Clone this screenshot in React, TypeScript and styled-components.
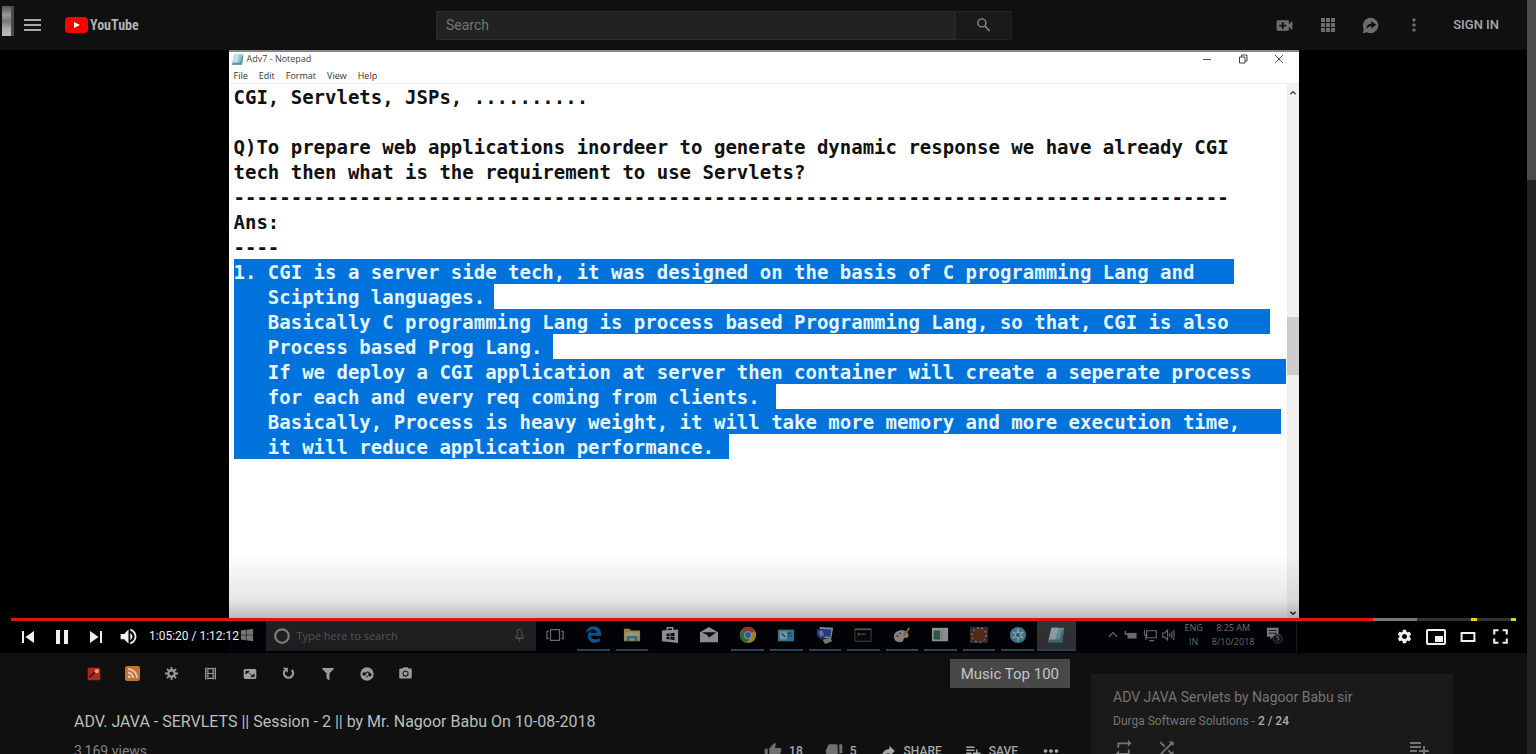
import React from "react";
import styled, { createGlobalStyle } from "styled-components";
import {
  MdVideoCall, MdMoreVert, MdSkipPrevious, MdSkipNext, MdPause, MdVolumeUp, MdSettings,
  MdThumbUp, MdThumbDown, MdReply, MdPlaylistAdd, MdRepeat, MdShuffle, MdMoreHoriz, MdFullscreen,
  MdPhotoCamera,
} from "react-icons/md";
import { FaWindows, FaFilter } from "react-icons/fa";
import { FaEdgeLegacy } from "react-icons/fa6";

const Global = createGlobalStyle`
  *, *::before, *::after { box-sizing: border-box; }
  body { margin: 0; background: #101010; font-family: Roboto, "Liberation Sans", sans-serif; }
  button { border: 0; padding: 0; margin: 0; background: none; color: inherit; font: inherit; cursor: pointer; }
  h1, h2, p { margin: 0; font-weight: 400; }
  svg { display: block; flex: none; }
`;

const Window = styled.div`
  display: flex;
  height: 100vh;
  overflow: hidden;
`;
const Page = styled.div`
  flex: 1;
  min-width: 0;
`;
const PageScroll = styled.div`
  width: 9px;
  background: #232323;
`;
const PageThumb = styled.div`
  height: 180px;
  background: #4b4b4b;
`;

/* Header */
const Header = styled.header`
  display: grid;
  grid-template-columns: 436px minmax(0, 576px) 1fr;
  align-items: center;
  height: 50px;
  background: #101010;
`;
const Brand = styled.div`
  display: flex;
  align-items: center;
  height: 50px;
  padding-left: 2px;
`;
const Handle = styled.span`
  width: 12px;
  height: 30px;
  margin: 0 10px 8px 0;
  border-right: 3px solid #4a4a4a;
  background: linear-gradient(#555, #999 30%, #777 50%, #aaa 75%, #bbb);
`;
const MenuButton = styled.button`
  display: flex;
  flex-direction: column;
  gap: 3px;
  width: 17px;
  margin-right: 24px;
`;
const MenuBar = styled.span`
  height: 2px;
  background: #a8a8a8;
`;
const Logo = styled.a`
  display: flex;
  align-items: center;
  gap: 2px;
  color: #b0b0b0;
  text-decoration: none;
  font: 700 14px/20px "Liberation Sans Narrow", "Roboto Condensed", Roboto, sans-serif;
`;
const SearchForm = styled.form`
  display: flex;
  height: 29px;
`;
const SearchInput = styled.input`
  flex: 1;
  min-width: 0;
  padding: 0 9px;
  border: 1px solid #2b2b2b;
  background: #222;
  color: #ccc;
  font: 400 14px/20px Roboto, sans-serif;
  outline: 0;
  &::placeholder { color: #757575; opacity: 1; }
`;
const SearchButton = styled.button`
  display: grid;
  place-items: center;
  width: 57px;
  border: 1px solid #232323;
  background: #1a1a1a;
  color: #8a8a8a;
`;
const HeaderActions = styled.div`
  display: flex;
  justify-content: flex-end;
  align-items: center;
  padding-right: 28px;
  color: #6d6d6d;
`;
const HeaderIcon = styled.button`
  display: grid;
  place-items: center;
  width: 43px;
  height: 40px;
`;
const SignIn = styled.a`
  margin-left: 18px;
  color: #a8a8a8;
  text-decoration: none;
  font-size: 13px;
  font-weight: 500;
  line-height: 20px;
`;

/* Player */
const Player = styled.section`
  position: relative;
  height: 603px;
  overflow: hidden;
  background: #000;
`;
const Frame = styled.div`
  display: flex;
  flex-direction: column;
  height: 100%;
  aspect-ratio: 1070 / 603;
  margin: 0 auto;
  background: #fff;
  font-family: "Open Sans", "Noto Sans", sans-serif;
`;
const TitleBar = styled.div`
  display: flex;
  align-items: center;
  gap: 3px;
  height: 18px;
  padding: 0 15px 2px 2px;
  border-top: 2px solid #888;
  color: #444;
  font-size: 9px;
  line-height: 12px;
`;
const WindowButtons = styled.div`
  display: flex;
  gap: 26px;
  margin-left: auto;
`;
const MenuRow = styled.div`
  display: flex;
  gap: 11px;
  height: 16px;
  padding-left: 5px;
  border-bottom: 1px solid #eee;
  color: #333;
  font-size: 9px;
  line-height: 16px;
`;
const Editor = styled.div`
  display: flex;
  flex: 1;
  min-height: 0;
`;
const Document = styled.div`
  flex: 1;
  min-width: 0;
  padding-left: 5px;
  color: #111;
  font: 700 19px/27px "DejaVu Sans Mono", "Liberation Mono", monospace;
  white-space: pre;
`;
const Line = styled.div`
  height: 25px;
`;
const Selected = styled.div<{ $width: number }>`
  width: ${(p) => p.$width}px;
  max-width: 100%;
  height: 25px;
  background: #0072dc;
  color: #e4f6ff;
`;
const EditorScroll = styled.div`
  display: flex;
  flex-direction: column;
  align-items: center;
  width: 12px;
  padding: 5px 0 3px;
  background: #f0f0f0;
`;
const EditorThumb = styled.div`
  width: 12px;
  height: 58px;
  margin: 220px 0 auto;
  background: #cdcdcd;
`;
const Taskbar = styled.div`
  display: flex;
  height: 33px;
  background: #02040a;
  color: #aaa;
`;
const StartCell = styled.div`
  display: grid;
  place-items: center;
  width: 37px;
  padding-bottom: 3px;
`;
const TaskSearch = styled.div`
  display: flex;
  align-items: center;
  gap: 6px;
  width: 270px;
  height: 31px;
  padding: 0 9px 0 7px;
  background: #2c2d30;
  color: #777;
  font-size: 11px;
  line-height: 16px;
  svg:last-child { margin-left: auto; }
`;
const TaskIcons = styled.div`
  display: grid;
  grid-template-columns: repeat(14, 1fr);
  width: 540px;
`;
const TaskCell = styled.div<{ $open?: boolean; $active?: boolean }>`
  display: grid;
  place-items: center;
  height: 31px;
  margin: 0 ${(p) => (p.$active ? 0 : 3)}px;
  border-bottom: 2px solid ${(p) => (p.$open ? "#47647e" : "transparent")};
  background: ${(p) => (p.$active ? "#43464a" : "none")};
`;
const Tray = styled.div`
  display: flex;
  flex: 1;
  align-items: center;
  gap: 5px;
  padding: 0 2px 3px 31px;
  border-right: 1px solid #222;
  margin-right: 2px;
  color: #999;
  font-size: 9px;
  line-height: 14px;
  text-align: center;
`;
const TrayText = styled.span`
  margin-left: 4px;
  white-space: nowrap;
`;
const Notice = styled.span`
  margin-left: auto;
  padding-right: 10px;
`;

/* Player controls over the video */
const Shade = styled.div`
  position: absolute;
  inset: auto 0 0;
  height: 100px;
  background: linear-gradient(transparent, rgba(0, 0, 0, 0.1) 47%, rgba(0, 0, 0, 0.27) 65%, rgba(0, 0, 0, 0.35));
`;
const Controls = styled.div`
  position: absolute;
  inset: auto 11px 0;
  color: #f0f0f0;
`;
const Progress = styled.div`
  display: flex;
  height: 3px;
  background: #333;
`;
const Span = styled.span<{ $grow: number; $color: string }>`
  flex: ${(p) => p.$grow} 1 0;
  background: ${(p) => p.$color};
`;
const ControlRow = styled.div`
  display: flex;
  align-items: center;
  height: 32px;
  padding-bottom: 1px;
`;
const ControlButton = styled.button<{ $width?: number }>`
  display: grid;
  place-items: center;
  width: ${(p) => p.$width ?? 34}px;
  height: 31px;
`;
const Time = styled.span`
  margin: 0 auto 1px 6px;
  font-size: 12px;
  line-height: 16px;
`;

/* Below the player */
const Below = styled.main`
  display: flex;
  gap: 21px;
  padding: 0 74px;
`;
const Primary = styled.div`
  flex: 1;
  min-width: 0;
`;
const Tools = styled.div`
  display: flex;
  align-items: center;
  height: 41px;
  color: #9a9a9a;
`;
const ToolButton = styled.button`
  display: grid;
  place-items: center;
  width: 39px;
  height: 30px;
`;
const MusicButton = styled.button`
  height: 29px;
  margin-left: auto;
  padding: 0 11px;
  background: #484848;
  color: #c4c4c4;
  font: 400 15px/20px Roboto, "Liberation Sans", sans-serif;
`;
const VideoTitle = styled.h1`
  margin-top: 16px;
  color: #bdbdbd;
  font-size: 16px;
  line-height: 24px;
`;
const Meta = styled.div`
  display: flex;
  align-items: center;
  justify-content: space-between;
  height: 34px;
  color: #858585;
  font-size: 14px;
  line-height: 20px;
`;
const Actions = styled.div`
  display: flex;
  gap: 22px;
  padding-right: 8px;
  color: #a8a8a8;
  font-size: 12px;
  font-weight: 500;
`;
const Action = styled.button`
  display: flex;
  align-items: center;
  gap: 7px;
`;
const Flip = styled.span`
  transform: scaleX(-1);
`;
const Muted = styled.span`
  color: #717171;
`;
const Playlist = styled.aside`
  width: 362px;
  height: 120px;
  margin-top: 21px;
  padding: 13px 22px;
  background: #1a1a1a;
  color: #757575;
`;
const PlaylistTitle = styled.h2`
  font-size: 14px;
  line-height: 20px;
`;
const PlaylistBy = styled.p`
  margin-top: 6px;
  font-size: 12px;
  line-height: 16px;
`;
const Count = styled.span`
  color: #aaa;
  font-weight: 500;
`;
const PlaylistTools = styled.div`
  display: flex;
  gap: 22px;
  margin-top: 7px;
  button:last-child { margin-left: auto; }
`;

const heading = [
  "CGI, Servlets, JSPs, ..........",
  "",
  "Q)To prepare web applications inordeer to generate dynamic response we have already CGI",
  "tech then what is the requirement to use Servlets?",
  "-".repeat(87),
  "Ans:",
  "----",
];
const answer: [string, number][] = [
  ["1. CGI is a server side tech, it was designed on the basis of C programming Lang and ", 1000],
  ["   Scipting languages.", 260],
  ["   Basically C programming Lang is process based Programming Lang, so that, CGI is also ", 1036],
  ["   Process based Prog Lang.", 319],
  ["   If we deploy a CGI application at server then container will create a seperate process ", 1052],
  ["   for each and every req coming from clients.", 542],
  ["   Basically, Process is heavy weight, it will take more memory and more execution time, ", 1047],
  ["   it will reduce application performance.", 495],
];

const Draw = ({ size = 18, box = 20, children }: { size?: number; box?: number; children: React.ReactNode }) => (
  <svg width={size} height={size} viewBox={`0 0 ${box} ${box}`} fill="none" aria-hidden="true">{children}</svg>
);

const NotePage = ({ size }: { size: number }) => (
  <Draw size={size}>
    <path d="M5 2h14l-2 16H1z" fill="#8fc3d2" />
    <path d="M5 2h8L9 16H2z" fill="#c2e2e9" />
    <path d="M1 18l2-3h11l3-10 2-1-2 14z" fill="#5b93a2" />
  </Draw>
);
const TaskView = () => (
  <Draw><path d="M5 4h10v12H5zM3 6H1v8h2M17 6h2v8h-2" stroke="#999" strokeWidth="1.4" /></Draw>
);
const Folder = () => (
  <Draw><path d="M1 3h6l2 2h10v12H1z" fill="#d9b565" /><path d="M2 7h16v8H2z" fill="#efd695" /><path d="M4 17v-6h12v6h-3v-3H7v3z" fill="#4c9ac0" /></Draw>
);
const Store = () => (
  <Draw>
    <path d="M7 6V2h6v4" stroke="#ccc" strokeWidth="1.6" /><path d="M1 5l18-1v15L1 17z" fill="#ccc" />
    <path d="M6 8.500l3.500-.5v3H6zM10.500 8L15 7.500V11h-4.500zM6 12h3.500v3L6 14.500zM10.500 12H15v3.500l-4.500-.5z" fill="#111" />
  </Draw>
);
const Mail = () => (
  <Draw><path d="M0 7l10-6 10 6v11H0z" fill="#ccc" /><path d="M2 7h16l-8 6-2-3z" fill="#111" /></Draw>
);
const Chrome = () => (
  <Draw>
    <circle cx="10" cy="10" r="9" fill="#e4bd3a" />
    <path d="M10 10L2.200 5.500A9 9 0 0 1 17.800 5.500z" fill="#d24b3e" />
    <path d="M2.200 5.500A9 9 0 0 0 9 19l3.500-7L10 10z" fill="#3b9a55" />
    <circle cx="10" cy="10" r="4.300" fill="#ddd" /><circle cx="10" cy="10" r="3.300" fill="#4180d8" />
  </Draw>
);
const Panel = () => (
  <Draw><path d="M1 4h18v13H1z" fill="#4ba3cc" /><path d="M3 6h8v9H3z" fill="#9cdcec" /><path d="M5 8l4 4M12 8h5M12 11h5" stroke="#1f668e" strokeWidth="1.500" /></Draw>
);
const Remote = () => (
  <Draw><path d="M4 1l15 1-2 12-12-1z" fill="#b5c0d4" /><path d="M6 3l11 1-1 8-9-1z" fill="#3158b8" /><path d="M1 4l6-1 4 8-6 4-4-5z" fill="#3c50c0" /><path d="M3 6l4-1 2 5-4 2z" fill="#96a4e0" /><path d="M7 15l9-2 2 4-8 3z" fill="#b0b0a4" /></Draw>
);
const Terminal = () => (
  <Draw><path d="M1 3h18v14H1z" fill="#0a0a0a" stroke="#666" /><path d="M1 4h18" stroke="#999" /><path d="M4 8l3 1-3 2M8 9h5" stroke="#999" /></Draw>
);
const Palette = () => (
  <Draw>
    <path d="M1 12c0-5 5-8 11-7 4 1 6 4 5 7-1 2-4 0-5 2s0 4-4 4c-4 0-7-2-7-6z" fill="#c0c0b8" />
    <circle cx="5" cy="11" r="1.300" fill="#b44" /><circle cx="8" cy="8" r="1.300" fill="#57a" /><circle cx="13" cy="8" r="1.300" fill="#695" />
    <path d="M12 12l6-10" stroke="#c89050" strokeWidth="2" />
  </Draw>
);
const Editplus = () => (
  <Draw><path d="M1 2h18v15H1z" fill="#c8d0ca" /><path d="M3 5h7v10H3z" fill="#3f7967" /><path d="M12 5v10" stroke="#999" /></Draw>
);
const Badger = () => (
  <Draw>
    <path d="M0 1h20v18H0z" fill="#493b54" /><circle cx="10" cy="10" r="7.500" fill="#7a3d20" />
    <circle cx="10" cy="10" r="8" stroke="#c8b49a" strokeWidth="1.500" strokeDasharray="2 3" />
  </Draw>
);
const Flower = () => (
  <Draw>
    <circle cx="10" cy="10" r="9" fill="#5aa5c8" />
    <path d="M10 3v14M4 6.500l12 7M16 6.500l-12 7" stroke="#d5edf4" strokeWidth="1.600" />
    <circle cx="10" cy="10" r="3" stroke="#d5edf4" fill="#3f8bb4" />
  </Draw>
);

const tasks: { icon: React.ReactNode; open?: boolean; active?: boolean }[] = [
  { icon: <TaskView /> },
  { icon: <FaEdgeLegacy size={17} color="#0b78d0" />, open: true },
  { icon: <Folder />, open: true },
  { icon: <Store /> },
  { icon: <Mail /> },
  { icon: <Chrome />, open: true },
  { icon: <Panel />, open: true },
  { icon: <Remote />, open: true },
  { icon: <Terminal />, open: true },
  { icon: <Palette />, open: true },
  { icon: <Editplus />, open: true },
  { icon: <Badger />, open: true },
  { icon: <Flower />, open: true },
  { icon: <NotePage size={18} />, open: true, active: true },
];

const tools: { label: string; icon: React.ReactNode }[] = [
  { label: "Magic actions", icon: <Draw size={14}><rect x="1" y="1" width="18" height="18" rx="2" fill="#a92a1e" /><path d="M3 15L13 6" stroke="#5d1410" strokeWidth="3" /><circle cx="14" cy="6" r="3" fill="#f0a070" /></Draw> },
  { label: "Feed", icon: <Draw size={15}><rect width="20" height="20" rx="3" fill="#bd7436" /><path d="M4 4a12 12 0 0 1 12 12M4 9a7 7 0 0 1 7 7" stroke="#e0cbb8" strokeWidth="2.400" /><circle cx="5.500" cy="14.500" r="1.800" fill="#e0cbb8" /></Draw> },
  { label: "Options", icon: <Draw size={13}><circle cx="10" cy="10" r="5" stroke="#9a9a9a" strokeWidth="3.500" /><path d="M10 0v4M10 16v4M0 10h4M16 10h4M3 3l3 3M14 14l3 3M17 3l-3 3M6 14l-3 3" stroke="#9a9a9a" strokeWidth="2.800" /></Draw> },
  { label: "Cinema mode", icon: <Draw size={13}><path d="M2.500 1v18M17.500 1v18M6 2.500h8M6 10h8M6 17.500h8M6 1v18M14 1v18" stroke="#9a9a9a" strokeWidth="1.800" /><path d="M2 2h4M2 6h4M2 10h4M2 14h4M2 18h4M14 2h4M14 6h4M14 10h4M14 14h4M14 18h4" stroke="#9a9a9a" /></Draw> },
  { label: "Wide mode", icon: <Draw size={14}><rect x="1" y="3" width="18" height="14" rx="2" fill="#a0a0a0" /><path d="M4 10V6h5zM16 10v4h-5zM8 8l5 4" fill="#101010" stroke="#101010" /></Draw> },
  { label: "Loop", icon: <Draw size={13}><path d="M5 4.500a7 7 0 1 0 10 0" stroke="#9a9a9a" strokeWidth="3.500" /><path d="M1 1h8v8z" fill="#9a9a9a" /></Draw> },
  { label: "Filters", icon: <FaFilter size={12} /> },
  { label: "Speed", icon: <Draw size={14}><circle cx="10" cy="10" r="9.500" fill="#9a9a9a" /><circle cx="6" cy="10" r="2.500" fill="#101010" /><circle cx="14" cy="11" r="2.500" fill="#101010" /><path d="M8 9l3-2 4 3M10 12v3" stroke="#101010" strokeWidth="1.500" /></Draw> },
  { label: "Snapshot", icon: <MdPhotoCamera size={15} /> },
];

export default function App() {
  return (
    <Window>
      <Global />
      <Page>
        <Header>
          <Brand>
            <Handle />
            <MenuButton aria-label="Menu"><MenuBar /><MenuBar /><MenuBar /></MenuButton>
            <Logo href="#">
              <svg width="23" height="16" viewBox="0 0 23 16"><rect width="23" height="16" rx="4" fill="#f00" /><path d="M9 5v6l6-3z" fill="#fff" /></svg>
              YouTube
            </Logo>
          </Brand>
          <SearchForm>
            <SearchInput aria-label="Search" placeholder="Search" />
            <SearchButton type="button" aria-label="Submit search">
              <Draw size={14}><circle cx="7" cy="7" r="5.700" stroke="#8a8a8a" strokeWidth="2" /><path d="M11 11l7 7.500" stroke="#8a8a8a" strokeWidth="2.300" /></Draw>
            </SearchButton>
          </SearchForm>
          <HeaderActions>
            <HeaderIcon aria-label="Create"><MdVideoCall size={21} /></HeaderIcon>
            <HeaderIcon aria-label="Apps">
              <svg width="16" height="16" viewBox="0 0 16 16" fill="currentColor">
                {[1, 6, 11].map((y) => [1, 6, 11].map((x) => <rect key={`${x}-${y}`} x={x} y={y} width="4" height="4" />))}
              </svg>
            </HeaderIcon>
            <HeaderIcon aria-label="Messages">
              <Draw size={17}><path d="M10 1a9 9 0 1 1-4 17l-5 1 1-5a9 9 0 0 1 8-13z" fill="#6d6d6d" /><path d="M11 5l6 4-6 4.500V11c-3 0-4 1-6 3 0-4 2-6 6-6.500z" fill="#101010" /></Draw>
            </HeaderIcon>
            <HeaderIcon aria-label="More"><MdMoreVert size={20} /></HeaderIcon>
            <SignIn href="#">SIGN IN</SignIn>
          </HeaderActions>
        </Header>

        <Player>
          <Frame>
            <TitleBar>
              <NotePage size={13} />
              <span>Adv7 - Notepad</span>
              <WindowButtons>
                <Draw size={10} box={10}><path d="M1 5.500h8" stroke="#555" /></Draw>
                <Draw size={10} box={10}><path d="M1.500 3h5.500v6H1.500zM3.500 3V1H9v6H7" stroke="#444" /></Draw>
                <Draw size={10} box={10}><path d="M1 1l8 8M9 1L1 9" stroke="#555" /></Draw>
              </WindowButtons>
            </TitleBar>
            <MenuRow><span>File</span><span>Edit</span><span>Format</span><span>View</span><span>Help</span></MenuRow>
            <Editor>
              <Document>
                {heading.map((text, i) => <Line key={i}>{text}</Line>)}
                {answer.map(([text, width]) => <Selected key={text} $width={width}>{text}</Selected>)}
              </Document>
              <EditorScroll>
                <Draw size={8} box={6}><path d="M1 4l2-2 2 2" stroke="#444" /></Draw>
                <EditorThumb />
                <Draw size={8} box={6}><path d="M1 2l2 2 2-2" stroke="#222" /></Draw>
              </EditorScroll>
            </Editor>
            <Taskbar>
              <StartCell><FaWindows size={14} /></StartCell>
              <TaskSearch>
                <Draw size={18}><circle cx="10" cy="10" r="7.500" stroke="#b0b0b0" strokeWidth="2.500" /></Draw>
                <span>Type here to search</span>
                <Draw size={15}><rect x="7" y="2" width="6" height="11" rx="2" stroke="#888" /><path d="M5 10v4h10v-4M10 14v4" stroke="#888" /></Draw>
              </TaskSearch>
              <TaskIcons>
                {tasks.map((t, i) => <TaskCell key={i} $open={t.open} $active={t.active}>{t.icon}</TaskCell>)}
              </TaskIcons>
              <Tray>
                <Draw size={12}><path d="M3 13l7-7 7 7" stroke="#999" strokeWidth="2" /></Draw>
                <Draw size={14}><path d="M5 7h13v8H5z" fill="#999" /><path d="M2 4v5h5" stroke="#999" strokeWidth="2" /></Draw>
                <Draw size={14}><path d="M5 4h14v10H5zM9 18h7M2 3v7h5M4 10v7" stroke="#999" strokeWidth="1.500" /></Draw>
                <Draw size={14}><path d="M1 7h3l4-4v14l-4-4H1zM11 7v6M14 5v10M17 3v14" stroke="#999" strokeWidth="1.500" /></Draw>
                <TrayText>ENG<br />IN</TrayText>
                <TrayText>8:25 AM<br />8/10/2018</TrayText>
                <Notice>
                  <Draw size={18}><path d="M1 2h13v10H8l-3 3v-3H1z" fill="#aaa" /><path d="M3 5h9M3 8h9" stroke="#222" /><circle cx="13" cy="14" r="5" fill="#15171a" stroke="#666" /><path d="M15 11h-3v2h2q2 2-2 3" stroke="#999" /></Draw>
                </Notice>
              </Tray>
            </Taskbar>
          </Frame>
          <Shade />
          <Controls>
            <Progress role="progressbar" aria-label="Playback">
              <Span $grow={1362} $color="#e0140f" />
              <Span $grow={44} $color="#777" />
              <Span $grow={54} $color="#333" />
              <Span $grow={6} $color="#e3d21a" />
              <Span $grow={34} $color="#333" />
              <Span $grow={5} $color="#e3d21a" />
            </Progress>
            <ControlRow>
              <ControlButton aria-label="Previous"><MdSkipPrevious size={24} /></ControlButton>
              <ControlButton aria-label="Pause"><MdPause size={24} /></ControlButton>
              <ControlButton aria-label="Next"><MdSkipNext size={24} /></ControlButton>
              <ControlButton $width={30} aria-label="Volume"><MdVolumeUp size={21} /></ControlButton>
              <Time>1:05:20 / 1:12:12</Time>
              <ControlButton $width={32} aria-label="Settings"><MdSettings size={17} /></ControlButton>
              <ControlButton $width={32} aria-label="Miniplayer">
                <Draw size={20}><rect x="1" y="3" width="18" height="14" rx="1" stroke="#f0f0f0" strokeWidth="2" /><path d="M9 9h8v6H9z" fill="#f0f0f0" /></Draw>
              </ControlButton>
              <ControlButton $width={32} aria-label="Theater mode">
                <Draw size={16}><rect x="2" y="5" width="16" height="10" stroke="#f0f0f0" strokeWidth="2.500" /></Draw>
              </ControlButton>
              <ControlButton $width={32} aria-label="Full screen"><MdFullscreen size={25} /></ControlButton>
            </ControlRow>
          </Controls>
        </Player>

        <Below>
          <Primary>
            <Tools>
              {tools.map((t) => <ToolButton key={t.label} aria-label={t.label}>{t.icon}</ToolButton>)}
              <MusicButton>Music Top 100</MusicButton>
            </Tools>
            <VideoTitle>ADV. JAVA - SERVLETS || Session - 2 || by Mr. Nagoor Babu On 10-08-2018</VideoTitle>
            <Meta>
              <span>3,169 views</span>
              <Actions>
                <Action><Muted><MdThumbUp size={18} /></Muted>18</Action>
                <Action><Muted><MdThumbDown size={18} /></Muted>5</Action>
                <Action><Flip><MdReply size={18} /></Flip>SHARE</Action>
                <Action><MdPlaylistAdd size={18} />SAVE</Action>
                <Action aria-label="More actions"><MdMoreHoriz size={22} /></Action>
              </Actions>
            </Meta>
          </Primary>
          <Playlist>
            <PlaylistTitle>ADV JAVA Servlets by Nagoor Babu sir</PlaylistTitle>
            <PlaylistBy>Durga Software Solutions - <Count>2 / 24</Count></PlaylistBy>
            <PlaylistTools>
              <button aria-label="Repeat"><MdRepeat size={21} /></button>
              <button aria-label="Shuffle"><MdShuffle size={21} /></button>
              <button aria-label="Add playlist"><MdPlaylistAdd size={24} /></button>
            </PlaylistTools>
          </Playlist>
        </Below>
      </Page>
      <PageScroll><PageThumb /></PageScroll>
    </Window>
  );
}
